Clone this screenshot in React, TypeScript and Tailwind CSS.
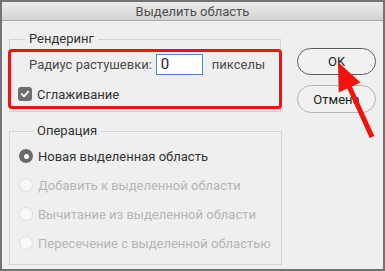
import React from "react";

const font = { fontFamily: "Roboto, 'Noto Sans', sans-serif" };

function Radio({ checked, label }: { checked?: boolean; label: string }) {
  return (
    <div className="flex items-center h-[14px] gap-[5px]">
      {checked ? (
        <span className="w-[14px] h-[14px] rounded-full bg-[#6b6b6b] flex items-center justify-center">
          <span className="w-[5px] h-[5px] rounded-full bg-white" />
        </span>
      ) : (
        <span className="w-[14px] h-[14px] rounded-full bg-[#f8f8f8] border border-[#dcdcdc]" />
      )}
      <span className={`text-[13px] leading-none ${checked ? "text-[#333]" : "text-[#b5b5b5]"}`}>{label}</span>
    </div>
  );
}

export default function App() {
  return (
    <div className="relative w-[385px] h-[271px] border-2 border-[#737373] bg-[#efefef] flex flex-col leading-none" style={font}>
      {/* title bar */}
      <div className="h-[19px] shrink-0 bg-gradient-to-b from-[#ebebeb] to-[#d4d4d4] border-b border-[#a9a9a9] flex items-center justify-center text-[13px] text-[#4d4d4d]">
        Выделить область
      </div>

      <div className="flex pl-[7px] pt-[10px]">
        {/* options */}
        <div className="w-[273px] flex flex-col">
          <fieldset className="w-[272px] border border-[#d3d3d3] pt-[2px] pb-[2px]">
            <legend className="ml-[15px] px-[4px] text-[13px] leading-[16px] text-[#333]">Рендеринг</legend>
            <div className="-mx-[2px] border-[3px] border-[#f2140c] rounded-[4px] pt-[2px] pb-[5px]">
              <div className="flex items-center h-[21px] pl-[18px] text-[13px] text-[#4a4a4a]">
                <span>Радиус растушевки:</span>
                <div className="ml-[4px] w-[47px] h-[21px] bg-white border border-[#4a85d8] flex items-center pl-[4px] text-[15px] text-[#222]">0</div>
                <span className="ml-[9px]">пикселы</span>
              </div>
              <div className="flex items-center h-[14px] mt-[12px] pl-[7px] gap-[5px]">
                <span className="w-[14px] h-[14px] rounded-[3px] bg-[#6d6d6d] flex items-center justify-center">
                  <svg width="10" height="10" viewBox="0 0 10 10">
                    <path d="M1.8 5.2 L4 7.3 L8.3 2.6" fill="none" stroke="white" strokeWidth="1.8" strokeLinecap="round" strokeLinejoin="round" />
                  </svg>
                </span>
                <span className="text-[13px] text-[#333]">Сглаживание</span>
              </div>
            </div>
          </fieldset>

          <fieldset className="mt-[11px] border border-[#d3d3d3] pt-[10px] pb-[14px] pl-[9px]">
            <legend className="ml-[14px] px-[4px] text-[13px] leading-[16px] text-[#333]">Операция</legend>
            <div className="flex flex-col gap-[15px]">
              <Radio checked label="Новая выделенная область" />
              <Radio label="Добавить к выделенной области" />
              <Radio label="Вычитание из выделенной области" />
              <Radio label="Пересечение с выделенной областью" />
            </div>
          </fieldset>
        </div>

        {/* buttons */}
        <div className="ml-[15px] pt-[17px] flex flex-col gap-[10px]">
          <button className="w-[79px] h-[27px] rounded-full border border-[#5c5c5c] bg-[#f1f1f1] text-[13px] text-[#222]">OK</button>
          <button className="w-[79px] h-[28px] rounded-full border border-[#b4b4b4] bg-[#f1f1f1] text-[13px] text-[#222]">Отмена</button>
        </div>
      </div>

      {/* annotation arrow */}
      <svg className="absolute -left-[2px] -top-[2px] pointer-events-none" width="385" height="271">
        <polygon
          points="338,62 360.5,82.5 351.9,86.5 374.3,136 369.7,138 347.3,88.5 338.7,92.5"
          fill="#f2140c"
        />
      </svg>
    </div>
  );
}
